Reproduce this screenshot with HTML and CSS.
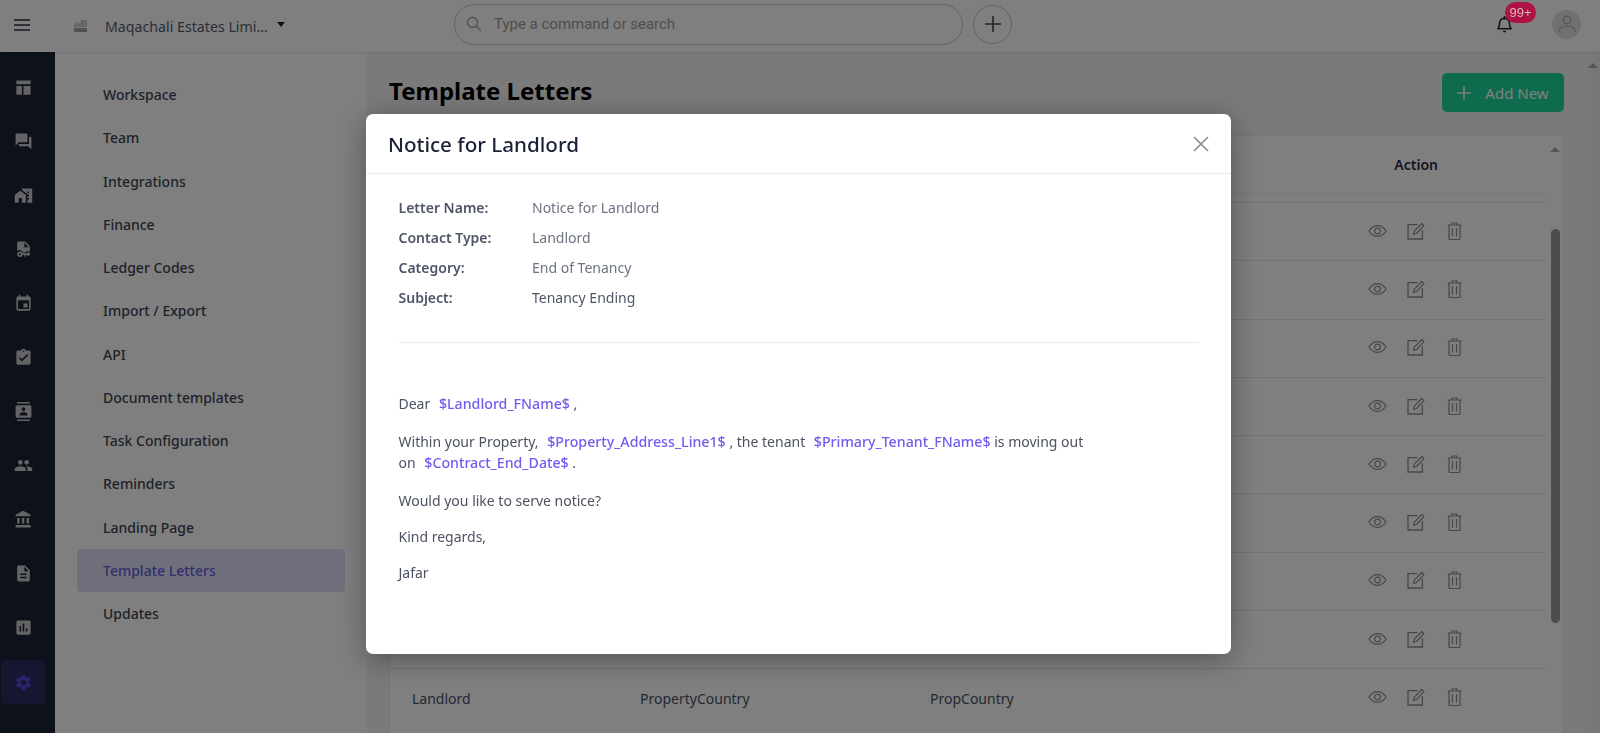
FILE: index.html
```html
<!DOCTYPE html>
<html>
  <head>
    <meta charset="UTF-8">
    <title>Template Letters</title>
    <link rel="stylesheet" href="styles.css">
  </head>
  <body>
    <svg class="sprites" width="0" height="0">
      <symbol id="eye" viewBox="0 0 20 14">
        <path d="M1 7c2.400-3.800 5.400-5.700 9-5.700s6.600 1.900 9 5.700c-2.400 3.800-5.400 5.700-9 5.700S3.400 10.800 1 7z" fill="none" stroke="currentColor" stroke-width="1.200"/>
        <circle cx="10" cy="7" r="3" fill="none" stroke="currentColor" stroke-width="1.200"/>
      </symbol>
      <symbol id="edit" viewBox="0 0 18 18">
        <path d="M10.500 2.600H1v14.400h14.400V8" fill="none" stroke="currentColor" stroke-width="1.300"/>
        <path d="M6.500 12.400l.8-3.200L14.800 1.500l2.200 2.200-7.500 7.800z" fill="none" stroke="currentColor" stroke-width="1.200" stroke-linejoin="round"/>
      </symbol>
      <symbol id="trash" viewBox="0 0 15 18">
        <path d="M.5 3h14M5 3V1h5v2M2 3v13.500c0 .5.400 1 1 1h9c.6 0 1-.5 1-1V3M5.500 6v8.500M9.500 6v8.500" fill="none" stroke="currentColor" stroke-width="1.200"/>
      </symbol>
    </svg>

    <div class="header">
      <button class="menu-btn" aria-label="Menu">
        <svg width="16" height="12" viewBox="0 0 16 12"><path d="M0 1h16M0 6h16M0 11h16" stroke="currentColor" stroke-width="1.600"/></svg>
      </button>
      <div class="company">
        <svg class="company-logo" width="15" height="14" viewBox="0 0 15 14"><path d="M1 8V5l4-2v2l3-2V1h6v7z" fill="#cfcfcf"/><path d="M1 9h13v4H1z" fill="#a4a4a4"/></svg>
        <span class="company-name">Maqachali Estates Limi...</span>
        <span class="caret"></span>
      </div>
      <div class="search">
        <svg width="16" height="16" viewBox="0 0 16 16"><circle cx="6.500" cy="6.500" r="5" fill="none" stroke="currentColor" stroke-width="1.300"/><path d="M10.300 10.300L15 15" stroke="currentColor" stroke-width="1.300"/></svg>
        <span>Type a command or search</span>
      </div>
      <button class="add-btn" aria-label="Add">
        <svg width="16" height="16" viewBox="0 0 16 16"><path d="M8 0v16M0 8h16" stroke="currentColor" stroke-width="1.600"/></svg>
      </button>
      <div class="header-right">
        <div class="bell">
          <svg width="15" height="18" viewBox="0 0 16 19"><path d="M1 14.500c1.300-1.200 1.700-2.600 1.700-5.500 0-3 2-5.500 5.300-5.500s5.300 2.500 5.300 5.500c0 2.900.4 4.300 1.700 5.500z" fill="none" stroke="currentColor" stroke-width="1.700" stroke-linejoin="round"/><path d="M8 1v2.500M6.500 17.500h3" stroke="currentColor" stroke-width="1.700"/></svg>
          <span class="badge">99+</span>
        </div>
        <div class="avatar">
          <svg width="18" height="18" viewBox="0 0 18 18"><circle cx="9" cy="5" r="3.800" fill="none" stroke="currentColor" stroke-width="1.200"/><path d="M.8 17c0-4 3.600-6 8.200-6s8.200 2 8.200 6" fill="none" stroke="currentColor" stroke-width="1.200"/></svg>
        </div>
      </div>
    </div>

    <div class="layout">
      <div class="rail">
        <a class="rail-item"><svg viewBox="0 0 24 24"><path d="M3 3h18v5H3zM3 10h7v11H3zM12 10h9v11h-9z"/></svg></a>
        <a class="rail-item"><svg viewBox="0 0 24 24"><path d="M21 6h-2v9H6v2c0 .55.45 1 1 1h11l4 4V7c0-.55-.45-1-1-1zm-4 6V3c0-.55-.45-1-1-1H3c-.55 0-1 .45-1 1v14l4-4h10c.55 0 1-.45 1-1z"/></svg></a>
        <a class="rail-item"><svg viewBox="0 0 24 24"><path d="M1 11v10h5v-6h4v6h5V11L8 6z"/><path d="M10 3v1.970l7 5V11h2v2h-2v2h2v2h-2v4h6V3H10zm9 6h-2V7h2v2z"/></svg></a>
        <a class="rail-item"><svg viewBox="0 0 24 24"><path d="M14 2H6c-1.100 0-2 .9-2 2v9.500a5 5 0 0 1 7.400 2.500H14a4 4 0 0 1 6-1V8zM13 9V3.500L18.500 9z"/><path d="M7.500 14.500a3.500 3.500 0 1 0 3.400 4.300H13v2h2v-2h1.500a2 2 0 1 0 0-2h-5.600a3.500 3.500 0 0 0-3.400-2.300zm0 2.300a1.200 1.200 0 1 1 0 2.400 1.200 1.200 0 0 1 0-2.400z"/></svg></a>
        <a class="rail-item"><svg viewBox="0 0 24 24"><path d="M17 12h-5v5h5v-5zM16 1v2H8V1H6v2H5c-1.110 0-1.990.9-1.990 2L3 19c0 1.100.89 2 2 2h14c1.100 0 2-.9 2-2V5c0-1.100-.9-2-2-2h-1V1h-2zm3 18H5V8h14v11z"/></svg></a>
        <a class="rail-item"><svg viewBox="0 0 24 24"><path d="M19 3h-4.180C14.400 1.840 13.300 1 12 1c-1.300 0-2.400.84-2.820 2H5c-1.100 0-2 .9-2 2v14c0 1.100.9 2 2 2h14c1.100 0 2-.9 2-2V5c0-1.100-.9-2-2-2zm-7 0c.55 0 1 .45 1 1s-.45 1-1 1-1-.45-1-1 .45-1 1-1zm-2 14l-4-4 1.410-1.410L10 14.170l6.590-6.590L18 9l-8 8z"/></svg></a>
        <a class="rail-item"><svg viewBox="0 0 24 24"><path d="M20 0H4v2h16V0zM4 24h16v-2H4v2zM20 4H4c-1.100 0-2 .9-2 2v12c0 1.100.9 2 2 2h16c1.100 0 2-.9 2-2V6c0-1.100-.9-2-2-2zm-8 2.750c1.240 0 2.250 1.010 2.250 2.250s-1.010 2.250-2.250 2.250S9.750 10.240 9.750 9 10.760 6.750 12 6.750zM17 17H7v-1.500c0-1.670 3.330-2.500 5-2.500s5 .83 5 2.500V17z"/></svg></a>
        <a class="rail-item"><svg viewBox="0 0 24 24"><path d="M16 11c1.660 0 2.990-1.340 2.990-3S17.660 5 16 5c-1.660 0-3 1.340-3 3s1.340 3 3 3zm-8 0c1.660 0 2.990-1.340 2.990-3S9.660 5 8 5C6.340 5 5 6.340 5 8s1.340 3 3 3zm0 2c-2.330 0-7 1.170-7 3.500V19h14v-2.500c0-2.330-4.670-3.500-7-3.500zm8 0c-.29 0-.62.02-.97.05 1.160.84 1.970 1.970 1.970 3.450V19h6v-2.500c0-2.330-4.670-3.500-7-3.500z"/></svg></a>
        <a class="rail-item"><svg viewBox="0 0 24 24"><path d="M4 10v7h3v-7H4zm6 0v7h3v-7h-3zM2 22h19v-3H2v3zm14-12v7h3v-7h-3zm-4.500-9L2 6v2h19V6l-9.500-5z"/></svg></a>
        <a class="rail-item"><svg viewBox="0 0 24 24"><path d="M14 2H6c-1.100 0-1.990.9-1.990 2L4 20c0 1.100.89 2 1.990 2H18c1.100 0 2-.9 2-2V8l-6-6zm2 16H8v-2h8v2zm0-4H8v-2h8v2zm-3-5V3.500L18.500 9H13z"/></svg></a>
        <a class="rail-item"><svg viewBox="0 0 24 24"><path d="M19 3H5c-1.100 0-2 .9-2 2v14c0 1.100.9 2 2 2h14c1.100 0 2-.9 2-2V5c0-1.100-.9-2-2-2zM9 17H7v-7h2v7zm4 0h-2V7h2v10zm4 0h-2v-4h2v4z"/></svg></a>
        <a class="rail-item active"><svg viewBox="0 0 24 24"><path d="M19.140 12.940c.04-.3.06-.61.06-.94 0-.32-.02-.64-.07-.94l2.030-1.580c.18-.14.23-.41.12-.61l-1.920-3.320c-.12-.22-.37-.29-.59-.22l-2.390.96c-.5-.38-1.030-.7-1.620-.94l-.36-2.540c-.04-.24-.24-.41-.48-.41h-3.840c-.24 0-.43.17-.47.41l-.36 2.540c-.59.24-1.130.57-1.620.94l-2.390-.96c-.22-.08-.47 0-.59.22L2.740 8.870c-.12.21-.08.47.12.61l2.030 1.580c-.05.3-.09.63-.09.94s.02.64.07.94l-2.030 1.580c-.18.14-.23.41-.12.61l1.920 3.320c.12.22.37.29.59.22l2.390-.96c.5.38 1.030.7 1.620.94l.36 2.540c.05.24.24.41.48.41h3.840c.24 0 .44-.17.47-.41l.36-2.540c.59-.24 1.130-.56 1.620-.94l2.390.96c.22.08.47 0 .59-.22l1.920-3.320c.12-.22.07-.47-.12-.61l-2.010-1.580zM12 15.600c-1.980 0-3.600-1.620-3.600-3.600s1.620-3.600 3.600-3.600 3.600 1.620 3.600 3.600-1.620 3.600-3.600 3.600z"/></svg></a>
      </div>

      <div class="subnav">
        <a class="subnav-item">Workspace</a>
        <a class="subnav-item">Team</a>
        <a class="subnav-item">Integrations</a>
        <a class="subnav-item">Finance</a>
        <a class="subnav-item">Ledger Codes</a>
        <a class="subnav-item">Import / Export</a>
        <a class="subnav-item">API</a>
        <a class="subnav-item">Document templates</a>
        <a class="subnav-item">Task Configuration</a>
        <a class="subnav-item">Reminders</a>
        <a class="subnav-item">Landing Page</a>
        <a class="subnav-item active">Template Letters</a>
        <a class="subnav-item">Updates</a>
      </div>

      <div class="main">
        <div class="title-row">
          <h1>Template Letters</h1>
          <button class="add-new">
            <svg width="14" height="14" viewBox="0 0 14 14"><path d="M7 0v14M0 7h14" stroke="currentColor" stroke-width="1.500"/></svg>
            <span>Add New</span>
          </button>
        </div>
        <div class="card">
          <div class="table">
            <div class="table-head"><span>Action</span></div>
            <div class="row"><span></span><span></span><span></span><div class="actions"><svg class="i-eye"><use href="#eye"/></svg><svg class="i-edit"><use href="#edit"/></svg><svg class="i-trash"><use href="#trash"/></svg></div></div>
            <div class="row"><span></span><span></span><span></span><div class="actions"><svg class="i-eye"><use href="#eye"/></svg><svg class="i-edit"><use href="#edit"/></svg><svg class="i-trash"><use href="#trash"/></svg></div></div>
            <div class="row"><span></span><span></span><span></span><div class="actions"><svg class="i-eye"><use href="#eye"/></svg><svg class="i-edit"><use href="#edit"/></svg><svg class="i-trash"><use href="#trash"/></svg></div></div>
            <div class="row"><span></span><span></span><span></span><div class="actions"><svg class="i-eye"><use href="#eye"/></svg><svg class="i-edit"><use href="#edit"/></svg><svg class="i-trash"><use href="#trash"/></svg></div></div>
            <div class="row"><span></span><span></span><span></span><div class="actions"><svg class="i-eye"><use href="#eye"/></svg><svg class="i-edit"><use href="#edit"/></svg><svg class="i-trash"><use href="#trash"/></svg></div></div>
            <div class="row"><span></span><span></span><span></span><div class="actions"><svg class="i-eye"><use href="#eye"/></svg><svg class="i-edit"><use href="#edit"/></svg><svg class="i-trash"><use href="#trash"/></svg></div></div>
            <div class="row"><span></span><span></span><span></span><div class="actions"><svg class="i-eye"><use href="#eye"/></svg><svg class="i-edit"><use href="#edit"/></svg><svg class="i-trash"><use href="#trash"/></svg></div></div>
            <div class="row"><span></span><span></span><span></span><div class="actions"><svg class="i-eye"><use href="#eye"/></svg><svg class="i-edit"><use href="#edit"/></svg><svg class="i-trash"><use href="#trash"/></svg></div></div>
            <div class="row"><span>Landlord</span><span>PropertyCountry</span><span>PropCountry</span><div class="actions"><svg class="i-eye"><use href="#eye"/></svg><svg class="i-edit"><use href="#edit"/></svg><svg class="i-trash"><use href="#trash"/></svg></div></div>
          </div>
          <div class="card-scroll">
            <span class="arrow-up"></span>
            <span class="thumb"></span>
          </div>
        </div>
      </div>

      <div class="page-scroll"><span class="arrow-up"></span></div>
    </div>

    <div class="overlay">
      <div class="modal">
        <div class="modal-head">
          <h2>Notice for Landlord</h2>
          <svg class="close" width="16" height="16" viewBox="0 0 16 16"><path d="M1 1l14 14M15 1L1 15" stroke="currentColor" stroke-width="1.700"/></svg>
        </div>
        <div class="modal-body">
          <div class="meta">
            <div class="meta-row"><b>Letter Name:</b><span>Notice for Landlord</span></div>
            <div class="meta-row"><b>Contact Type:</b><span>Landlord</span></div>
            <div class="meta-row"><b>Category:</b><span>End of Tenancy</span></div>
            <div class="meta-row"><b>Subject:</b><span class="dark">Tenancy Ending</span></div>
          </div>
          <div class="letter">
            <p class="has-var">Dear <span class="var">$Landlord_FName$</span> ,</p>
            <p class="has-var">Within your Property, <span class="var">$Property_Address_Line1$</span> , the tenant <span class="var">$Primary_Tenant_FName$</span> is moving out<br>on <span class="var">$Contract_End_Date$</span> .</p>
            <p>Would you like to serve notice?</p>
            <p>Kind regards,</p>
            <p>Jafar</p>
          </div>
        </div>
      </div>
    </div>
  </body>
</html>
```

FILE: styles.css
```css
* {
  box-sizing: border-box;
}
html, body {
  height: 100%;
}
body {
  margin: 0;
  overflow: hidden;
  display: flex;
  flex-direction: column;
  background-color: #fff;
  color: #4a5064;
  font-size: 14px;
  font-family: "Noto Sans", Inter, sans-serif;
}
button {
  border: none;
  background: none;
  padding: 0;
  font: inherit;
}
.sprites {
  position: absolute;
}

/* top bar */
.header {
  flex: none;
  height: 52px;
  display: flex;
  align-items: center;
  background-color: #fff;
  box-shadow: 0 1px 3px rgba(0, 0, 0, 0.08);
  position: relative;
}
.menu-btn {
  width: 44px;
  display: flex;
  justify-content: center;
  margin-bottom: 2px;
  color: #2b2f3c;
}
.company {
  width: 410px;
  display: flex;
  align-items: center;
  padding-left: 29px;
  font-size: 14.2px;
  color: #545c70;
}
.company-name {
  margin-left: 17px;
}
.caret {
  margin-left: 9px;
  margin-bottom: 4px;
  border-left: 4.5px solid transparent;
  border-right: 4.5px solid transparent;
  border-top: 5px solid #1c1e26;
}
.search {
  width: 509px;
  height: 41px;
  margin-bottom: 4px;
  display: flex;
  align-items: center;
  gap: 12px;
  padding-left: 11px;
  border: 1px solid #c6c6c6;
  border-radius: 21px;
  font-family: Roboto, sans-serif;
  font-size: 15px;
  color: #9c9c9c;
}
.search svg {
  color: #a0a0a0;
}
.add-btn {
  width: 39px;
  height: 39px;
  margin-left: 10px;
  margin-bottom: 4px;
  display: flex;
  align-items: center;
  justify-content: center;
  border: 1px solid #c6c6c6;
  border-radius: 50%;
  color: #4a4a4a;
}
.header-right {
  margin-left: auto;
  margin-bottom: 4px;
  display: flex;
  align-items: center;
  gap: 40px;
  padding-right: 19px;
}
.bell {
  position: relative;
  display: flex;
  color: #1e2436;
}
.badge {
  position: absolute;
  z-index: 11;
  left: 8px;
  top: -13px;
  width: 31px;
  height: 21px;
  border-radius: 11px;
  background-color: #ad1444;
  color: #d8b6c0;
  font-family: "Liberation Sans", sans-serif;
  font-size: 13px;
  line-height: 21px;
  text-align: center;
}
.avatar {
  width: 29px;
  height: 29px;
  display: flex;
  align-items: center;
  justify-content: center;
  border-radius: 50%;
  background-color: #e0e0e0;
  color: #a6a6a6;
}

/* page */
.layout {
  flex: 1;
  min-height: 0;
  display: flex;
}
.rail {
  flex: none;
  width: 55px;
  padding-top: 8px;
  display: flex;
  flex-direction: column;
  background-color: #1a2233;
}
.rail-item {
  height: 54.1px;
  width: 44px;
  margin-left: 1px;
  display: flex;
  align-items: center;
  justify-content: center;
  border-radius: 4px;
}
.rail-item svg {
  width: 19px;
  height: 19px;
  fill: #c8c9ce;
}
.rail-item.active {
  background-color: #2a2c63;
  height: 44px;
  margin-top: 5px;
}
.rail-item.active svg {
  fill: #5b45d6;
}
.subnav {
  flex: none;
  width: 312px;
  padding: 21px 22px 0;
  background-color: #fff;
}
.subnav-item {
  height: 43.25px;
  display: flex;
  align-items: center;
  padding-left: 26px;
  border-radius: 4px;
  font-weight: 500;
  color: #3f4454;
}
.subnav-item.active {
  background-color: #dfe1f6;
  color: #6b5bd8;
}
.main {
  flex: 1;
  min-width: 0;
  padding: 0 22px;
  background-color: #f5f5f7;
  overflow: hidden;
}
.title-row {
  height: 81px;
  margin-bottom: 2px;
  display: flex;
  align-items: center;
  justify-content: space-between;
}
h1 {
  margin: 0 0 5px;
  color: #000;
  font-size: 24px;
  font-weight: 700;
}
.add-new {
  width: 122px;
  height: 39px;
  display: flex;
  align-items: center;
  justify-content: center;
  gap: 14px;
  border-radius: 5px;
  background-color: #1ed69c;
  color: #fff;
  font-size: 15px;
}
.card {
  display: flex;
  height: 700px;
  background-color: #fff;
  border: 1px solid #ececec;
  border-radius: 4px;
}
.table {
  flex: 1;
}
.table-head {
  height: 58px;
  display: flex;
  align-items: center;
  justify-content: flex-end;
  padding-right: 109px;
  border-bottom: 1px solid #ececec;
  margin-bottom: 8px;
  font-weight: 600;
  color: #2a2d45;
}
.row {
  height: 58.3px;
  display: flex;
  align-items: center;
  border-top: 1px solid #e8e8e8;
  color: #4a5064;
}
.row span:nth-child(1) {
  width: 250px;
  padding-left: 22px;
}
.row span:nth-child(2) {
  width: 290px;
}
.row span:nth-child(3) {
  width: 429px;
}
.actions {
  display: flex;
  align-items: center;
  color: #8e8e8e;
  margin-left: auto;
  margin-bottom: 2px;
  padding-right: 85px;
}
.actions svg {
  height: 18px;
  display: block;
}
.i-eye {
  width: 19px;
}
.i-edit {
  width: 18px;
  margin-left: 20px;
}
.i-trash {
  width: 15px;
  margin-left: 22px;
}
.card-scroll {
  flex: none;
  width: 16px;
  display: flex;
  flex-direction: column;
  align-items: center;
}
.arrow-up {
  margin-top: 11px;
  border-left: 5px solid transparent;
  border-right: 5px solid transparent;
  border-bottom: 5px solid #a8a8a8;
}
.thumb {
  width: 9px;
  height: 394px;
  margin-top: 77px;
  border-radius: 5px;
  background-color: #9a9a9a;
}
.page-scroll {
  flex: none;
  width: 14px;
  display: flex;
  justify-content: center;
  align-items: flex-start;
  background-color: #f1f1f1;
}

/* letter popup */
.overlay {
  position: fixed;
  top: 0;
  left: 0;
  width: 100%;
  height: 100%;
  z-index: 10;
  display: flex;
  justify-content: center;
  padding: 114px 3px 0 0;
  background-color: rgba(0, 0, 0, 0.5);
}
.modal {
  width: 865px;
  height: 540px;
  border-radius: 7px;
  background-color: #fff;
  box-shadow: 0 5px 30px rgba(0, 0, 0, 0.35);
}
.modal-head {
  height: 60px;
  display: flex;
  align-items: center;
  justify-content: space-between;
  padding: 0 22px;
  border-bottom: 1px solid #ebebeb;
}
h2 {
  margin: 0;
  color: #1b2236;
  font-size: 20.6px;
  font-weight: 500;
}
.close {
  color: #8b8f96;
}
.modal-body {
  padding: 18px 32px 0 32.5px;
}
.meta {
  padding-bottom: 29px;
  border-bottom: 1px solid #ebebeb;
}
.meta-row {
  height: 30.2px;
  display: flex;
  align-items: center;
  color: #6b7280;
}
.meta-row b {
  width: 133.5px;
  font-weight: 600;
  color: #4f5568;
}
.meta-row .dark {
  color: #4f5568;
}
.letter {
  padding-top: 50px;
  color: #4b5161;
  line-height: 21px;
}
.letter p {
  margin: 0 0 15px;
}
.letter .has-var {
  margin-bottom: 17px;
}
.var {
  padding-left: 5px;
  font-size: 14.2px;
  font-weight: 500;
  color: #6f5cf0;
}
```
